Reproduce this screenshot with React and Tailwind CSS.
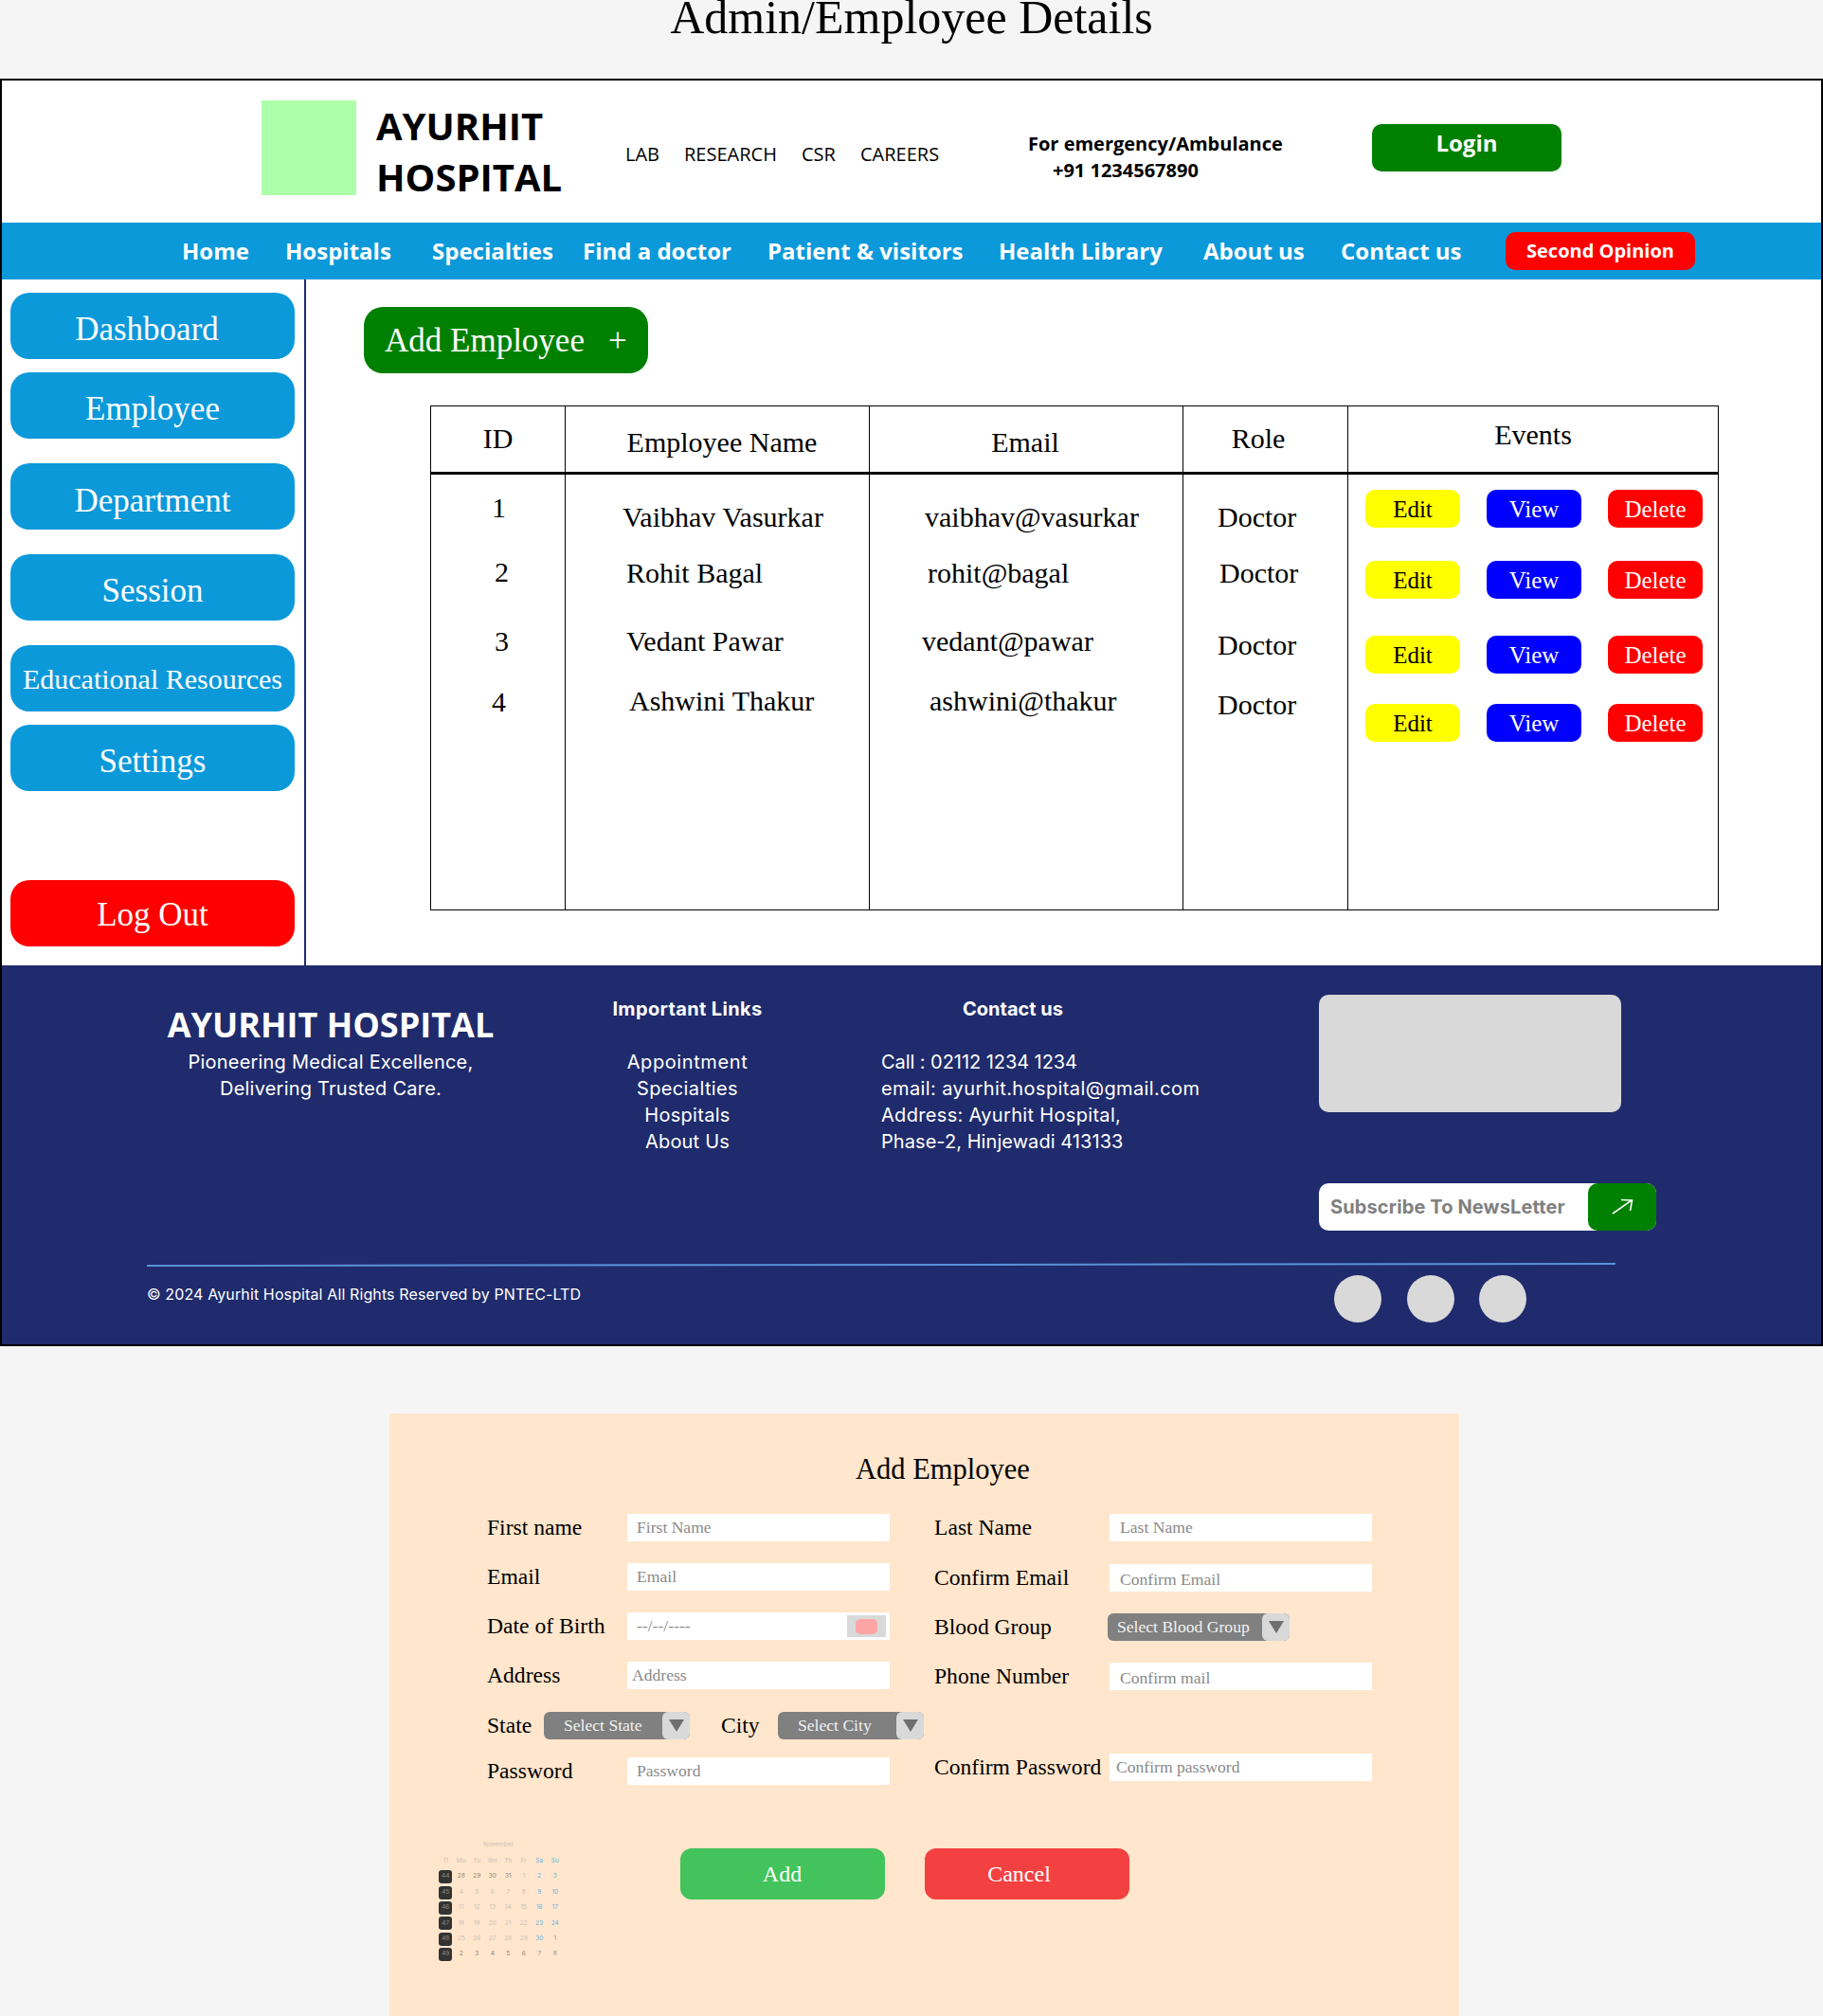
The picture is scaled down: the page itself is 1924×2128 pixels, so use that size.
const serif = "font-['Liberation_Serif',serif]";
const open = "font-['Open_Sans',sans-serif]";
const work = "font-['Inter',sans-serif]";

const topLinks = [
  { label: 'LAB', width: 'w-[62px]' },
  { label: 'RESEARCH', width: 'w-[124px]' },
  { label: 'CSR', width: 'w-[62px]' },
  { label: 'CAREERS', width: 'w-[110px]' },
];

const navLinks = [
  { label: 'Home', width: 'w-[109px]' },
  { label: 'Hospitals', width: 'w-[155px]' },
  { label: 'Specialties', width: 'w-[159px]' },
  { label: 'Find a doctor', width: 'w-[195px]' },
  { label: 'Patient & visitors', width: 'w-[244px]' },
  { label: 'Health Library', width: 'w-[216px]' },
  { label: 'About us', width: 'w-[145px]' },
  { label: 'Contact us', width: 'w-[174px]' },
];

const sideItems = [
  { label: 'Dashboard', box: 'mt-[14px] bg-[#0c99da]', text: 'text-[35px] pt-[8px] pr-[12px]' },
  { label: 'Employee', box: 'mt-[14px] bg-[#0c99da]', text: 'text-[35px] pt-[8px]' },
  { label: 'Department', box: 'mt-[26px] bg-[#0c99da]', text: 'text-[35px] pt-[10px]' },
  { label: 'Session', box: 'mt-[26px] bg-[#0c99da]', text: 'text-[35px] pt-[8px]' },
  { label: 'Educational Resources', box: 'mt-[26px] bg-[#0c99da]', text: 'text-[30px]' },
  { label: 'Settings', box: 'mt-[14px] bg-[#0c99da]', text: 'text-[35px] pt-[8px]' },
  { label: 'Log Out', box: 'mt-[94px] bg-[#ff0000]', text: 'text-[35px] pt-[4px]' },
];

const idCells = [
  { text: '1', cls: 'mt-[18px] ml-[64px]' },
  { text: '2', cls: 'mt-[34px] ml-[67px]' },
  { text: '3', cls: 'mt-[39px] ml-[67px]' },
  { text: '4', cls: 'mt-[30px] ml-[64px]' },
];
const nameCells = [
  { text: 'Vaibhav Vasurkar', cls: 'mt-[28px] ml-[60px]' },
  { text: 'Rohit Bagal', cls: 'mt-[25px] ml-[64px]' },
  { text: 'Vedant Pawar', cls: 'mt-[38px] ml-[64px]' },
  { text: 'Ashwini Thakur', cls: 'mt-[29px] ml-[67px]' },
];
const emailCells = [
  { text: 'vaibhav@vasurkar', cls: 'mt-[28px] ml-[58px]' },
  { text: 'rohit@bagal', cls: 'mt-[25px] ml-[61px]' },
  { text: 'vedant@pawar', cls: 'mt-[38px] ml-[55px]' },
  { text: 'ashwini@thakur', cls: 'mt-[29px] ml-[63px]' },
];
const roleCells = [
  { text: 'Doctor', cls: 'mt-[28px] ml-[36px]' },
  { text: 'Doctor', cls: 'mt-[25px] ml-[38px]' },
  { text: 'Doctor', cls: 'mt-[42px] ml-[36px]' },
  { text: 'Doctor', cls: 'mt-[29px] ml-[36px]' },
];
const eventRows = ['mt-[16px]', 'mt-[35px]', 'mt-[39px]', 'mt-[32px]'];

function Column({ title, headClass, width, cells }) {
  return (
    <div className={`${width} shrink-0 border-r border-black`}>
      <div className={`h-[72px] border-b-[3px] border-black text-center text-[30px] leading-[34px] ${headClass}`}>{title}</div>
      {cells.map((cell) => (
        <div key={cell.text + cell.cls} className={`text-[30px] leading-[34px] ${cell.cls}`}>{cell.text}</div>
      ))}
    </div>
  );
}

function EmployeeTable() {
  return (
    <div className="mt-[34px] ml-[70px] flex h-[533px] w-[1360px] border border-black text-black">
      <Column title="ID" headClass="pt-[17px]" width="w-[142px]" cells={idCells} />
      <Column title="Employee Name" headClass="pt-[21px] pl-[10px]" width="w-[321px]" cells={nameCells} />
      <Column title="Email" headClass="pt-[21px] pr-[2px]" width="w-[331px]" cells={emailCells} />
      <Column title="Role" headClass="pt-[17px] pr-[15px]" width="w-[174px]" cells={roleCells} />
      <div className="flex-1">
        <div className="h-[72px] border-b-[3px] border-black pt-[13px] text-center text-[30px] leading-[34px]">Events</div>
        {eventRows.map((row) => (
          <div key={row} className={`flex gap-[28px] pl-[18px] text-[25px] ${row}`}>
            <button className="flex h-[40px] w-[100px] items-center justify-center rounded-[10px] bg-[#ffff00] pt-[2px] text-black">Edit</button>
            <button className="flex h-[40px] w-[100px] items-center justify-center rounded-[10px] bg-[#0000ff] pt-[2px] text-white">View</button>
            <button className="flex h-[40px] w-[100px] items-center justify-center rounded-[10px] bg-[#ff0000] pt-[2px] text-white">Delete</button>
          </div>
        ))}
      </div>
    </div>
  );
}

function Header() {
  return (
    <header>
      <div className={`flex h-[150px] text-black ${open}`}>
        <div className="mt-[21px] ml-[274px] h-[100px] w-[100px] bg-[#aeffa9]" />
        <div className="mt-[21px] ml-[21px] w-[263px] text-[40px] font-bold leading-[54px]">
          <div>AYURHIT</div>
          <div>HOSPITAL</div>
        </div>
        <div className="mt-[64px] flex h-[28px] w-[425px] text-[20px] leading-[28px]">
          {topLinks.map((link) => (
            <span key={link.label} className={link.width}>{link.label}</span>
          ))}
        </div>
        <div className="mt-[53px] w-[363px] text-[20px] font-bold leading-[28px]">
          <div>For emergency/Ambulance</div>
          <div className="pl-[26px]">+91 1234567890</div>
        </div>
        <button className="mt-[46px] h-[50px] w-[200px] rounded-[10px] bg-[#008000] pb-[10px] text-[24px] font-bold text-white">Login</button>
      </div>
      <nav className={`flex h-[60px] items-center pl-[190px] text-[24px] font-bold text-white bg-[#0c99da] ${open}`}>
        {navLinks.map((link) => (
          <span key={link.label} className={link.width}>{link.label}</span>
        ))}
        <button className="h-[40px] w-[200px] rounded-[10px] bg-[#ff0000] text-[20px]">Second Opinion</button>
      </nav>
    </header>
  );
}

function Sidebar() {
  return (
    <aside className="w-[321px] shrink-0 border-r-2 border-[#1f2b6c] pl-[9px]">
      {sideItems.map((item) => (
        <button key={item.label} className={`flex h-[70px] w-[300px] items-center justify-center rounded-[20px] text-white ${item.box} ${item.text}`}>
          {item.label}
        </button>
      ))}
    </aside>
  );
}

function Footer() {
  return (
    <footer className="h-[400px] bg-[#1f2b6c] text-white">
      <div className={`flex h-[280px] ${work}`}>
        <div className="ml-[98px] w-[498px] pt-[41px] text-center">
          <div className={`h-[47px] text-[36px] font-bold leading-[44px] ${open}`}>AYURHIT HOSPITAL</div>
          <div className="text-[20px] leading-[28px] tracking-[0.2px]">Pioneering Medical Excellence,</div>
          <div className="text-[20px] leading-[28px] tracking-[0.22px]">Delivering Trusted Care.</div>
        </div>
        <div className="w-[255px] pt-[32px] text-center text-[20px] leading-[28px]">
          <div className="font-bold tracking-[0.36px]">Important Links</div>
          <div className="mt-[28px] tracking-[0.6px]">Appointment</div>
          <div className="tracking-[0.37px]">Specialties</div>
          <div className="tracking-[0.3px]">Hospitals</div>
          <div className="tracking-[0.2px]">About Us</div>
        </div>
        <div className="ml-[77px] w-[462px] pt-[32px] text-[20px] leading-[28px]">
          <div className="ml-[86px] font-bold">Contact us</div>
          <div className="mt-[28px] tracking-[-0.06px]">Call : 02112 1234 1234</div>
          <div className="tracking-[0.4px]">email: ayurhit.hospital@gmail.com</div>
          <div className="tracking-[0.32px]">Address: Ayurhit Hospital,</div>
          <div className="tracking-[0.06px]">Phase-2, Hinjewadi 413133</div>
        </div>
        <div className="pt-[31px]">
          <div className="h-[124px] w-[319px] rounded-[10px] bg-[#d9d9d9]" />
          <div className="mt-[75px] flex h-[50px] w-[356px] items-center justify-between rounded-[10px] bg-white pl-[12px]">
            <span className="text-[20px] font-bold tracking-[0.12px] text-[#808080]">Subscribe To NewsLetter</span>
            <span className="flex h-[50px] w-[72px] items-center justify-center rounded-[10px] bg-[#008000]">
              <svg width="24" height="18" viewBox="0 0 24 18" fill="none" stroke="white" strokeWidth="1.6">
                <path d="M2 16 L22 2" />
                <path d="M11 1.5 L22.5 2 L20.5 13" />
              </svg>
            </span>
          </div>
        </div>
      </div>
      <div className="mt-[35px] ml-[153px] h-[2px] w-[1550px] -rotate-[0.08deg] bg-[#5a93d8]" />
      <div className={`flex ${work}`}>
        <div className="mt-[18px] ml-[153px] w-[1253px] text-[16px] leading-[24px] tracking-[0.12px]">© 2024 Ayurhit Hospital All Rights Reserved by PNTEC-LTD</div>
        <div className="mt-[10px] flex">
          <div className="h-[50px] w-[50px] rounded-full bg-[#d9d9d9]" />
          <div className="ml-[27px] h-[50px] w-[50px] rounded-full bg-[#d9d9d9]" />
          <div className="ml-[26px] h-[50px] w-[50px] rounded-full bg-[#d9d9d9]" />
        </div>
      </div>
    </footer>
  );
}

function Field({ placeholder, pad = 'pl-[10px]', text = '' }) {
  return (
    <div className={`flex h-[29px] w-[277px] items-center bg-white text-[17.6px] text-[#8a8a8a] ${pad} ${text}`}>{placeholder}</div>
  );
}

function Select({ label, width, pad }) {
  return (
    <div className={`flex h-[29px] items-stretch overflow-hidden rounded-[6px] bg-[#808080] text-[17.6px] text-[#f2f2f2] ${width}`}>
      <span className={`flex-1 self-center ${pad}`}>{label}</span>
      <span className="flex w-[29px] items-center justify-center rounded-l-[6px] bg-[#d9d9d9]">
        <svg width="16" height="13" viewBox="0 0 16 13"><path d="M0 0 H16 L8 13 Z" fill="#6e6e6e" /></svg>
      </span>
    </div>
  );
}

function Row({ label, labelWidth = 'w-[148px]', className = '', children }) {
  return (
    <div className={`flex items-center ${className}`}>
      <span className={`pb-[2px] text-[23.6px] leading-[26px] ${labelWidth}`}>{label}</span>
      {children}
    </div>
  );
}

const calRows = [
  { week: '44', days: [['28', 'd'], ['29', 'd'], ['30', 'd'], ['31', 'd'], ['1', 'l'], ['2', 'b'], ['3', 'b']] },
  { week: '45', days: [['4', 'l'], ['5', 'l'], ['6', 'l'], ['7', 'l'], ['8', 'l'], ['9', 'b'], ['10', 'b']] },
  { week: '46', days: [['11', 'l'], ['12', 'l'], ['13', 'l'], ['14', 'l'], ['15', 'l'], ['16', 'b'], ['17', 'b']] },
  { week: '47', days: [['18', 'l'], ['19', 'l'], ['20', 'l'], ['21', 'l'], ['22', 'l'], ['23', 'b'], ['24', 'b']] },
  { week: '48', days: [['25', 'l'], ['26', 'l'], ['27', 'l'], ['28', 'l'], ['29', 'l'], ['30', 'b'], ['1', 'g']] },
  { week: '49', days: [['2', 'd'], ['3', 'd'], ['4', 'd'], ['5', 'd'], ['6', 'd'], ['7', 'g'], ['8', 'g']] },
];
const dayTone = { d: 'text-[#8c8479]', l: 'text-[#c9c2b8]', b: 'text-[#68b0e4]', g: 'text-[#8d9aa0]' };

function MiniCalendar() {
  return (
    <div className={`grid w-[132px] grid-cols-8 auto-rows-[16.45px] items-center justify-items-center text-[6.5px] ${work}`}>
      <div className="col-span-8 pr-[4px] text-[#c9c2b8]">November</div>
      {['11', 'Mo', 'Tu', 'We', 'Th', 'Fr'].map((d) => (
        <div key={d} className="text-[#c9c2b8]">{d}</div>
      ))}
      <div className="text-[#68b0e4]">Sa</div>
      <div className="text-[#68b0e4]">Su</div>
      {calRows.map((row) => [
        <div key={row.week} className="flex h-[14px] w-[14px] items-center justify-center rounded-[3px] bg-[#333333] text-[#8a8a8a]">{row.week}</div>,
        ...row.days.map(([d, tone], i) => (
          <div key={row.week + i} className={dayTone[tone]}>{d}</div>
        )),
      ])}
    </div>
  );
}

function AddEmployeeForm() {
  return (
    <section className="mt-[71px] ml-[411px] h-[636px] w-[1129px] bg-[#ffe6cc] pt-[43px] text-black">
      <div className="ml-[492px] text-[30.5px] leading-[32px]">Add Employee</div>
      <div className="mt-[31px] flex pl-[103px]">
        <div className="w-[472px]">
          <Row label="First name"><Field placeholder="First Name" /></Row>
          <Row label="Email" className="mt-[23px]"><Field placeholder="Email" /></Row>
          <Row label="Date of Birth" className="mt-[23px]">
            <div className="flex h-[29px] w-[277px] items-center justify-between bg-white pl-[10px] pr-[4px] text-[17.6px] text-[#8a8a8a]">
              <span>--/--/----</span>
              <span className="flex h-[23px] w-[41px] items-center justify-center bg-[#d9d9d9]">
                <span className="h-[16px] w-[23px] rounded-[5px] bg-[#ffa5a5]" />
              </span>
            </div>
          </Row>
          <Row label="Address" className="mt-[23px]"><Field placeholder="Address" pad="pl-[5px]" /></Row>
          <div className="mt-[24px] flex items-center">
            <span className="w-[60px] pb-[2px] text-[23.6px] leading-[26px]">State</span>
            <Select label="Select State" width="w-[154px]" pad="pl-[21px]" />
            <span className="ml-[33px] w-[60px] pb-[2px] text-[23.6px] leading-[26px]">City</span>
            <Select label="Select City" width="w-[154px]" pad="pl-[21px]" />
          </div>
          <Row label="Password" className="mt-[19px]"><Field placeholder="Password" /></Row>
        </div>
        <div>
          <Row label="Last Name" labelWidth="w-[185px]"><Field placeholder="Last Name" pad="pl-[11px]" /></Row>
          <Row label="Confirm Email" labelWidth="w-[185px]" className="mt-[24px]"><Field placeholder="Confirm Email" pad="pl-[11px]" text="pt-[3px]" /></Row>
          <Row label="Blood Group" labelWidth="w-[183px]" className="mt-[23px]">
            <Select label="Select Blood Group" width="w-[192px]" pad="pl-[10px]" />
          </Row>
          <Row label="Phone Number" labelWidth="w-[185px]" className="mt-[23px]"><Field placeholder="Confirm mail" pad="pl-[11px]" text="pt-[3px]" /></Row>
          <Row label="Confirm Password" labelWidth="w-[185px]" className="mt-[67px]"><Field placeholder="Confirm password" pad="pl-[7px]" /></Row>
        </div>
      </div>
      <div className="mt-[56px] flex pl-[51px]">
        <MiniCalendar />
        <button className="mt-[11px] ml-[123.5px] h-[54px] w-[216px] rounded-[12px] bg-[#43c35c] text-[24px] text-white">Add</button>
        <button className="mt-[11px] ml-[42px] h-[54px] w-[216px] rounded-[12px] bg-[#f34142] pr-[16px] text-[24px] text-white">Cancel</button>
      </div>
    </section>
  );
}

export default function App() {
  return (
    <div className={`h-[2128px] w-[1924px] overflow-hidden bg-[#f5f5f5] ${serif}`}>
      <div className="h-[83px] overflow-hidden text-center">
        <h1 className="-mt-[10px] text-[50px] leading-[57px] text-black">Admin/Employee Details</h1>
      </div>
      <div className="h-[1338px] border-2 border-black bg-white">
        <Header />
        <div className="flex h-[724px]">
          <Sidebar />
          <main className="pt-[29px] pl-[61px]">
            <button className="flex h-[70px] w-[300px] items-center rounded-[20px] bg-[#008000] pl-[22px] pt-[2px] text-[35px] text-white">
              <span>Add Employee</span>
              <span className="ml-[25px]">+</span>
            </button>
            <EmployeeTable />
          </main>
        </div>
        <Footer />
      </div>
      <AddEmployeeForm />
    </div>
  );
}
